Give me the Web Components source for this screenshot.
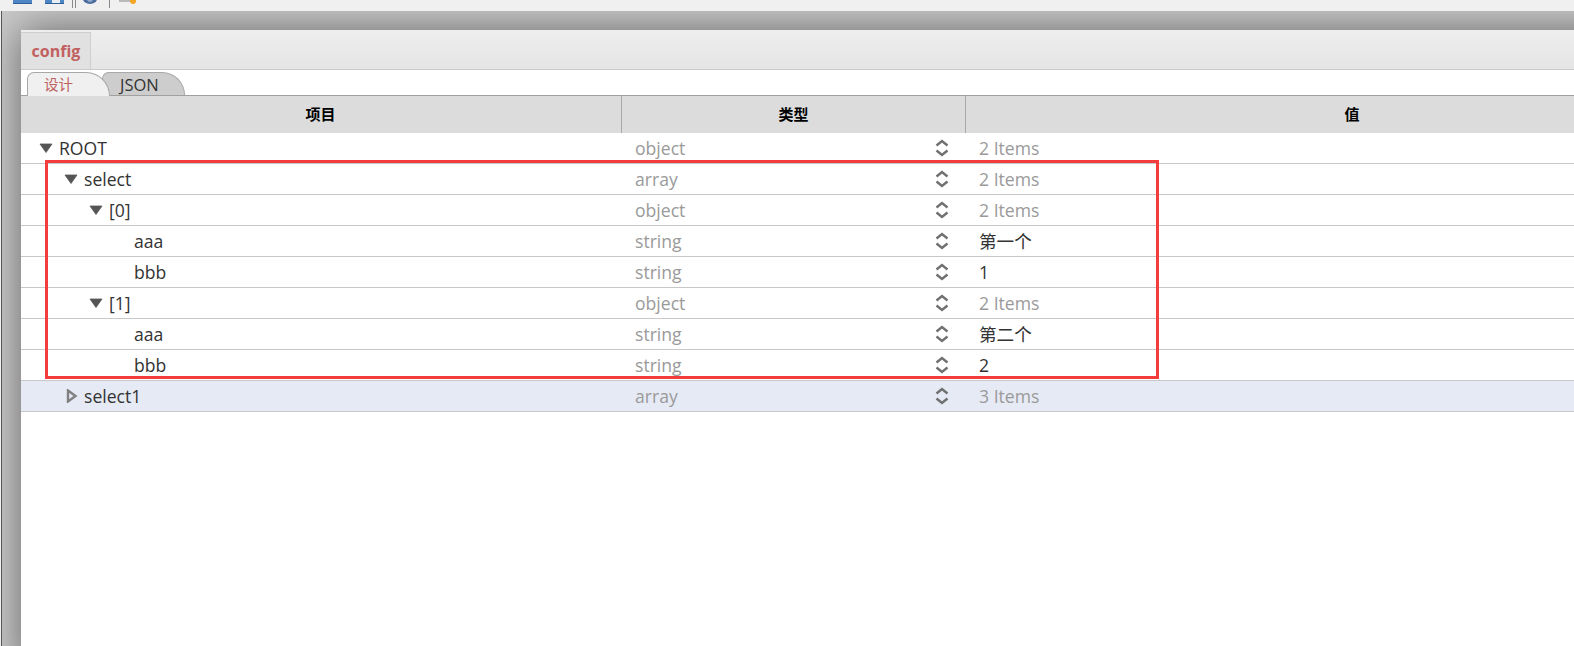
<!DOCTYPE html>
<html lang="zh">
<head>
<meta charset="utf-8">
<title>config</title>
<style>
  html, body { margin: 0; height: 100%; overflow: hidden; background: #f0f0f0; }
  body { font-family: "Open Sans", "Noto Sans CJK SC", sans-serif; }
</style>
</head>
<body>
<editor-window>
  <tool-bar slot="toolbar"></tool-bar>
  <doc-panel>
    <doc-tabs slot="tabs" label="config"></doc-tabs>
    <mode-tabs slot="modes"></mode-tabs>
    <tree-table>
      <tree-row level="0" arrow="down" type="object" value="2 Items" muted>ROOT</tree-row>
      <tree-row level="1" arrow="down" type="array" value="2 Items" muted>select</tree-row>
      <tree-row level="2" arrow="down" type="object" value="2 Items" muted>[0]</tree-row>
      <tree-row level="3" type="string" value="第一个">aaa</tree-row>
      <tree-row level="3" type="string" value="1">bbb</tree-row>
      <tree-row level="2" arrow="down" type="object" value="2 Items" muted>[1]</tree-row>
      <tree-row level="3" type="string" value="第二个">aaa</tree-row>
      <tree-row level="3" type="string" value="2">bbb</tree-row>
      <tree-row level="1" arrow="right" type="array" value="3 Items" muted selected>select1</tree-row>
    </tree-table>
    <red-box slot="overlay"></red-box>
  </doc-panel>
</editor-window>

<script>
// Outer window: toolbar on top, grey desktop with the document panel below
class EditorWindow extends HTMLElement {
  constructor() {
    super();
    this.attachShadow({ mode: "open" });
    this.shadowRoot.innerHTML = `
      <style>
        :host { display: flex; flex-direction: column; width: 1574px; height: 646px; overflow: hidden; }
        .desk {
          flex: 1;
          min-height: 0;
          margin-left: 1px;
          border-left: 1px solid #555;
          padding: 19px 0 0 19px;
          background: #cacaca;
          overflow: hidden;
        }
      </style>
      <slot name="toolbar"></slot>
      <div class="desk"><slot></slot></div>
    `;
  }
}

// Only the bottom few pixels of the toolbar are on screen
class ToolBar extends HTMLElement {
  constructor() {
    super();
    this.attachShadow({ mode: "open" });
    this.shadowRoot.innerHTML = `
      <style>
        :host { display: flex; height: 11px; background: #f0f0f0; overflow: hidden; align-items: flex-start; }
        svg { display: block; }
        .sep { width: 1px; height: 8px; background: #8a8a8a; }
      </style>
      <svg width="19" height="4" style="margin-left:13px"><rect width="19" height="3" fill="#4f86c6"/><rect y="3" width="19" height="1" fill="#2f5f98"/></svg>
      <svg width="19" height="4" style="margin-left:13px"><rect width="19" height="3" fill="#4f86c6"/><rect x="7" width="8" height="3" fill="#e8edf3"/><rect y="3" width="19" height="1" fill="#2f5f98"/></svg>
      <div class="sep" style="margin-left:8px"></div>
      <div class="sep" style="margin-left:2px"></div>
      <svg width="18" height="4" style="margin-left:6px"><ellipse cx="8" cy="-1" rx="7" ry="5" fill="#4b6c9e"/><ellipse cx="8" cy="-1" rx="3" ry="3" fill="#8ea9cc"/></svg>
      <div class="sep" style="margin-left:9px"></div>
      <svg width="20" height="5" style="margin-left:9px"><rect x="0" y="0" width="13" height="2" fill="#b9b9b9"/><circle cx="14" cy="1" r="3" fill="#f4a623"/></svg>
    `;
  }
}

class DocPanel extends HTMLElement {
  constructor() {
    super();
    this.attachShadow({ mode: "open" });
    this.shadowRoot.innerHTML = `
      <style>
        :host {
          display: block;
          position: relative;
          width: 1717px;
          height: 640px;
          background: #fff;
          box-shadow: 0 0 38px rgba(0, 0, 0, .5);
        }
      </style>
      <slot name="tabs"></slot>
      <slot name="modes"></slot>
      <slot></slot>
      <slot name="overlay"></slot>
    `;
  }
}

class DocTabs extends HTMLElement {
  constructor() {
    super();
    this.attachShadow({ mode: "open" });
    this.shadowRoot.innerHTML = `
      <style>
        :host {
          display: flex;
          align-items: flex-end;
          height: 39px;
          box-sizing: content-box;
          background: linear-gradient(#eeeeee, #e5e5e5);
          border-bottom: 1px solid #cbcbcb;
        }
        .tab {
          box-sizing: border-box;
          width: 70px;
          height: 37px;
          padding-left: 1px;
          border: 1px solid #cfcfcf;
          border-left: 0;
          border-bottom: 0;
          background: #e1e1e1;
          color: #c2605f;
          font-size: 16px;
          font-weight: 700;
          line-height: 37px;
          text-align: center;
        }
      </style>
      <div class="tab"></div>
    `;
    this.shadowRoot.querySelector(".tab").textContent = this.getAttribute("label");
  }
}

class ModeTabs extends HTMLElement {
  constructor() {
    super();
    this.attachShadow({ mode: "open" });
    this.shadowRoot.innerHTML = `
      <style>
        :host {
          display: flex;
          align-items: flex-end;
          height: 25px;
          padding-left: 6px;
          border-bottom: 1px solid #a0a0a0;
          background: #fff;
        }
        .tab {
          box-sizing: border-box;
          width: 83px;
          height: 23px;
          border: 1px solid #a8a8a8;
          border-bottom: 0;
          border-radius: 7px 24px 0 0;
          font-size: 14.5px;
          line-height: 23px;
        }
        .design {
          position: relative;
          z-index: 1;
          height: 24px;
          margin-bottom: -1px;
          padding-left: 16px;
          background: #f0f0f0;
          color: #c0605f;
        }
        .json {
          margin-left: -8px;
          padding-left: 17px;
          background: #cdcdcd;
          color: #333;
          font-size: 16.5px;
        }
      </style>
      <div class="tab design">设计</div>
      <div class="tab json">JSON</div>
    `;
  }
}

class TreeTable extends HTMLElement {
  constructor() {
    super();
    this.attachShadow({ mode: "open" });
    this.shadowRoot.innerHTML = `
      <style>
        :host { display: block; }
        .head {
          display: grid;
          grid-template-columns: 600px 344px 1fr;
          height: 37px;
          background: #dcdcdc;
          color: #000;
          font-size: 15px;
          font-weight: 700;
          line-height: 37px;
          text-align: center;
        }
        .head div:first-child { padding-right: 1px; }
        .head div + div { border-left: 1px solid #a8a8a8; }
      </style>
      <div class="head"><div>项目</div><div>类型</div><div>值</div></div>
      <slot></slot>
    `;
  }
}

class TreeRow extends HTMLElement {
  constructor() {
    super();
    const level = Number(this.getAttribute("level") || 0);
    const arrow = this.getAttribute("arrow");
    this.attachShadow({ mode: "open" });
    this.shadowRoot.innerHTML = `
      <style>
        :host {
          display: grid;
          grid-template-columns: 600px 344px 1fr;
          box-sizing: border-box;
          height: 31px;
          border-bottom: 1px solid #c8c8c8;
          background: #fff;
          color: #333;
          font-size: 17.6px;
          line-height: 30px;
        }
        :host([selected]) { background: #e6eaf5; }
        .name { display: flex; align-items: center; padding-left: ${18 + 25 * level}px; }
        .toggle { flex: none; display: flex; align-items: center; width: 20px; height: 30px; }
        .type { display: flex; justify-content: space-between; align-items: center; padding: 0 15px 0 14px; color: #9a9a9a; }
        .value { padding-left: 14px; }
        :host([muted]) .value { color: #9a9a9a; }
        svg { display: block; }
      </style>
      <div class="name">
        <span class="toggle">${arrowIcon(arrow)}</span>
        <slot></slot>
      </div>
      <div class="type">
        <span class="tname"></span>
        <svg width="16" height="18" viewBox="0 0 16 18" fill="none" stroke="#707070" stroke-width="2.4">
          <path d="M2.500 6.500 8 2l5.500 4.500M2.500 11.500 8 16l5.500-4.500"/>
        </svg>
      </div>
      <div class="value"></div>
    `;
    this.shadowRoot.querySelector(".tname").textContent = this.getAttribute("type");
    this.shadowRoot.querySelector(".value").textContent = this.getAttribute("value");
  }
}

function arrowIcon(kind) {
  if (kind === "down") {
    return `<svg width="14" height="10" viewBox="0 0 14 10"><path d="M1 1h12L7 9.500z" fill="#555" stroke="#555" stroke-width=".8" stroke-linejoin="round"/></svg>`;
  }
  if (kind === "right") {
    return `<svg width="14" height="14" viewBox="0 0 14 14"><path d="M4 1.500 11.500 7 4 12.500z" fill="none" stroke="#808080" stroke-width="2.400"/></svg>`;
  }
  return "";
}

// The red annotation rectangle somebody drew over the screenshot
class RedBox extends HTMLElement {
  constructor() {
    super();
    this.attachShadow({ mode: "open" });
    this.shadowRoot.innerHTML = `
      <style>
        :host {
          position: absolute;
          left: 24px;
          top: 130px;
          box-sizing: border-box;
          width: 1114px;
          height: 219px;
          border: 3px solid #f43c3c;
          pointer-events: none;
        }
      </style>
    `;
  }
}

customElements.define("editor-window", EditorWindow);
customElements.define("tool-bar", ToolBar);
customElements.define("doc-panel", DocPanel);
customElements.define("doc-tabs", DocTabs);
customElements.define("mode-tabs", ModeTabs);
customElements.define("tree-table", TreeTable);
customElements.define("tree-row", TreeRow);
customElements.define("red-box", RedBox);
</script>
</body>
</html>
